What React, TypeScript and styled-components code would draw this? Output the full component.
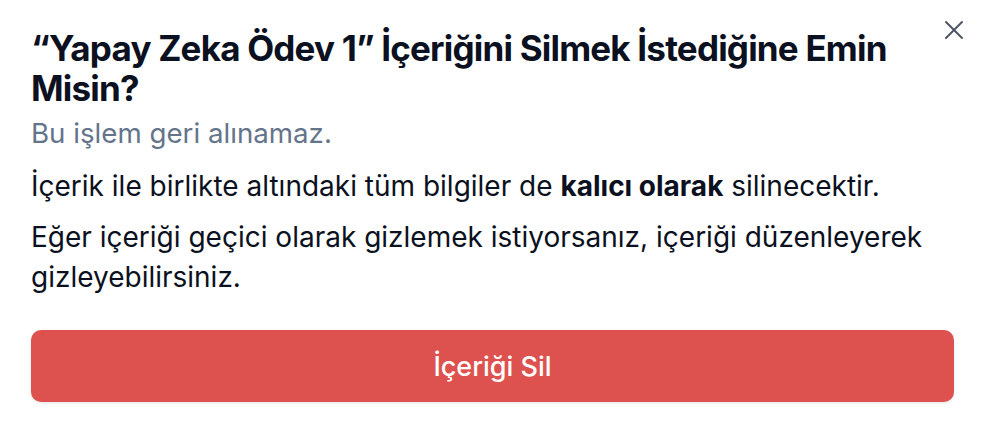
import React from 'react'
import styled, { createGlobalStyle } from 'styled-components'

const GlobalStyle = createGlobalStyle`
  html, body {
    margin: 0;
    padding: 0;
    background: #ffffff;
  }

  body {
    font-family: Inter, "Noto Sans", "Liberation Sans", sans-serif;
    -webkit-font-smoothing: antialiased;
  }
`

const Dialog = styled.div`
  width: 988px;
  height: 430px;
  box-sizing: border-box;
  padding: 28px 34px 0 31px;
  background: #ffffff;
  display: flex;
  flex-direction: column;
`

const Header = styled.div`
  display: flex;
  align-items: flex-start;
  gap: 16px;
`

const Title = styled.h2`
  flex: 1;
  margin: 0;
  font-size: 35px;
  line-height: 40px;
  font-weight: 700;
  color: #0b1120;
  letter-spacing: -0.8px;
`

const CloseButton = styled.button`
  flex: none;
  width: 20px;
  height: 20px;
  margin: -8px -10px 0 0;
  padding: 0;
  border: 0;
  background: transparent;
  color: #4b5563;
  cursor: pointer;
  display: flex;
  align-items: center;
  justify-content: center;
`

const Subtitle = styled.p`
  margin: 5px 0 0;
  font-size: 27.7px;
  line-height: 40px;
  color: #64748b;
`

const Body = styled.p`
  margin: 13px 0 0;
  font-size: 28px;
  line-height: 40px;
  color: #0b1120;

  & + & {
    margin-top: 11px;
  }

  strong {
    font-weight: 700;
  }
`

const DeleteButton = styled.button`
  margin-top: 33px;
  width: 100%;
  height: 72px;
  border: 0;
  border-radius: 10px;
  background: #dd524e;
  color: #ffffff;
  font-family: inherit;
  font-size: 27px;
  font-weight: 500;
  box-shadow: 0 1px 3px rgba(15, 23, 42, 0.12);
  cursor: pointer;
`

const CloseIcon = () => (
  <svg width="20" height="20" viewBox="0 0 20 20" fill="none" stroke="currentColor" strokeWidth="2" strokeLinecap="round">
    <path d="M2 2 18 18" />
    <path d="M18 2 2 18" />
  </svg>
)

const App = () => {
  return (
    <>
      <GlobalStyle />
      <Dialog role="dialog">
        <Header>
          <Title>“Yapay Zeka Ödev 1” İçeriğini Silmek İstediğine Emin Misin?</Title>
          <CloseButton aria-label="Kapat">
            <CloseIcon />
          </CloseButton>
        </Header>
        <Subtitle>Bu işlem geri alınamaz.</Subtitle>
        <Body>
          İçerik ile birlikte altındaki tüm bilgiler de <strong>kalıcı olarak</strong> silinecektir.
        </Body>
        <Body>
          Eğer içeriği geçici olarak gizlemek istiyorsanız, içeriği düzenleyerek gizleyebilirsiniz.
        </Body>
        <DeleteButton>İçeriği Sil</DeleteButton>
      </Dialog>
    </>
  )
}

export default App
